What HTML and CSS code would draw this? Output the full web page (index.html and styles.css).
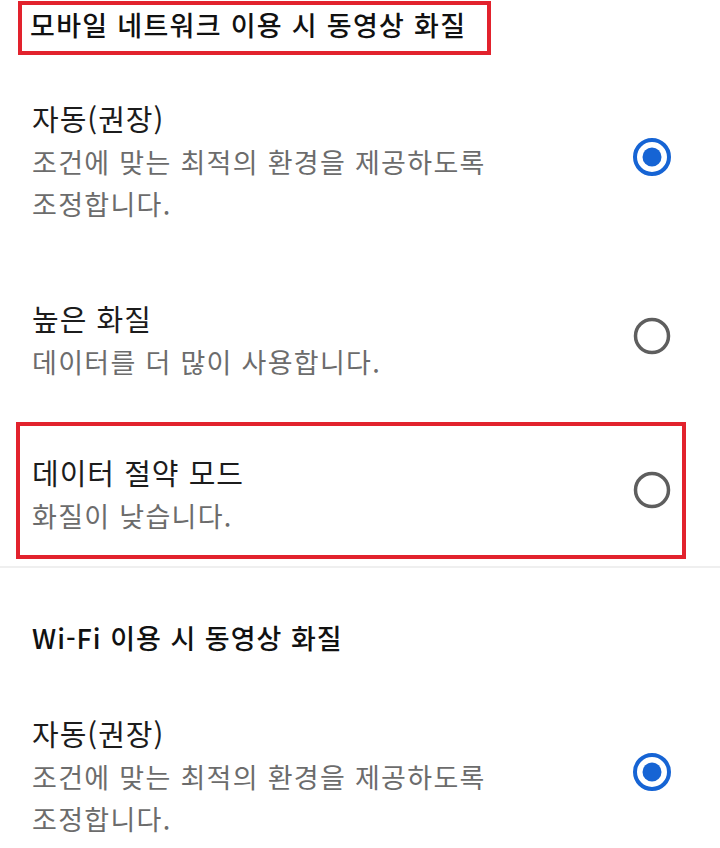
FILE: index.html
```html
<!DOCTYPE html>
<html lang="ko">
<head>
    <meta charset="UTF-8">
    <meta name="viewport" content="width=device-width, initial-scale=1.0">
    <title>동영상 화질</title>
    <link rel="stylesheet" href="styles.css">
</head>
<body>

    <div class="section">
        <div class="section-title boxed-title">모바일 네트워크 이용 시 동영상 화질</div>

        <div class="option">
            <div class="text">
                <div class="name">자동(권장)</div>
                <div class="desc">조건에 맞는 최적의 환경을 제공하도록<br>조정합니다.</div>
            </div>
            <svg class="radio" viewBox="0 0 40 40"><circle cx="20" cy="20" r="17" fill="none" stroke="#1664d4" stroke-width="4"/><circle cx="20" cy="20" r="9.5" fill="#1664d4"/></svg>
        </div>

        <div class="option">
            <div class="text">
                <div class="name">높은 화질</div>
                <div class="desc">데이터를 더 많이 사용합니다.</div>
            </div>
            <svg class="radio" viewBox="0 0 40 40"><circle cx="20" cy="20" r="16.5" fill="none" stroke="#5e5e5e" stroke-width="3.5"/></svg>
        </div>

        <div class="option boxed-option">
            <div class="text">
                <div class="name">데이터 절약 모드</div>
                <div class="desc">화질이 낮습니다.</div>
            </div>
            <svg class="radio" viewBox="0 0 40 40"><circle cx="20" cy="20" r="16.5" fill="none" stroke="#5e5e5e" stroke-width="3.5"/></svg>
        </div>
    </div>

    <div class="divider"></div>

    <div class="section">
        <div class="section-title wifi-title">Wi-Fi 이용 시 동영상 화질</div>

        <div class="option">
            <div class="text">
                <div class="name">자동(권장)</div>
                <div class="desc">조건에 맞는 최적의 환경을 제공하도록<br>조정합니다.</div>
            </div>
            <svg class="radio" viewBox="0 0 40 40"><circle cx="20" cy="20" r="17" fill="none" stroke="#1664d4" stroke-width="4"/><circle cx="20" cy="20" r="9.5" fill="#1664d4"/></svg>
        </div>
    </div>

</body>
</html>
```

FILE: styles.css
```css
body {
    font-family: "Noto Sans CJK KR", "Noto Sans", sans-serif;
    background-color: #ffffff;
    margin: 0;
    overflow: hidden;
}

.section-title {
    color: #111;
    font-weight: 500;
}

.boxed-title {
    display: inline-block;
    margin: 1px 0 5px 18px;
    border: 4px solid #e2222d;
    padding: 2px 21px 8px 8px;
    font-size: 27px;
    letter-spacing: 1.3px;
    line-height: 36px;
}

.wifi-title {
    padding: 50px 32px 17px;
    font-size: 27px;
    line-height: 40px;
    letter-spacing: 1px;
}

.option {
    display: flex;
    align-items: center;
    justify-content: space-between;
    padding: 35px 48px 35px 32px;
}

.name {
    font-size: 29px;
    line-height: 46px;
    color: #1c1c1c;
    letter-spacing: 1px;
}

.desc {
    font-size: 27px;
    line-height: 42px;
    color: #6c6c6c;
    letter-spacing: 1.3px;
}

.radio {
    width: 40px;
    height: 40px;
    margin-bottom: 6px;
    flex-shrink: 0;
}

/* 강조 표시된 항목 */
.boxed-option {
    margin: 4px 34px 7px 16px;
    border: 4px solid #e2222d;
    padding: 23px 10px 18px 12px;
}

.divider {
    height: 2px;
    background-color: #efefef;
}
```
